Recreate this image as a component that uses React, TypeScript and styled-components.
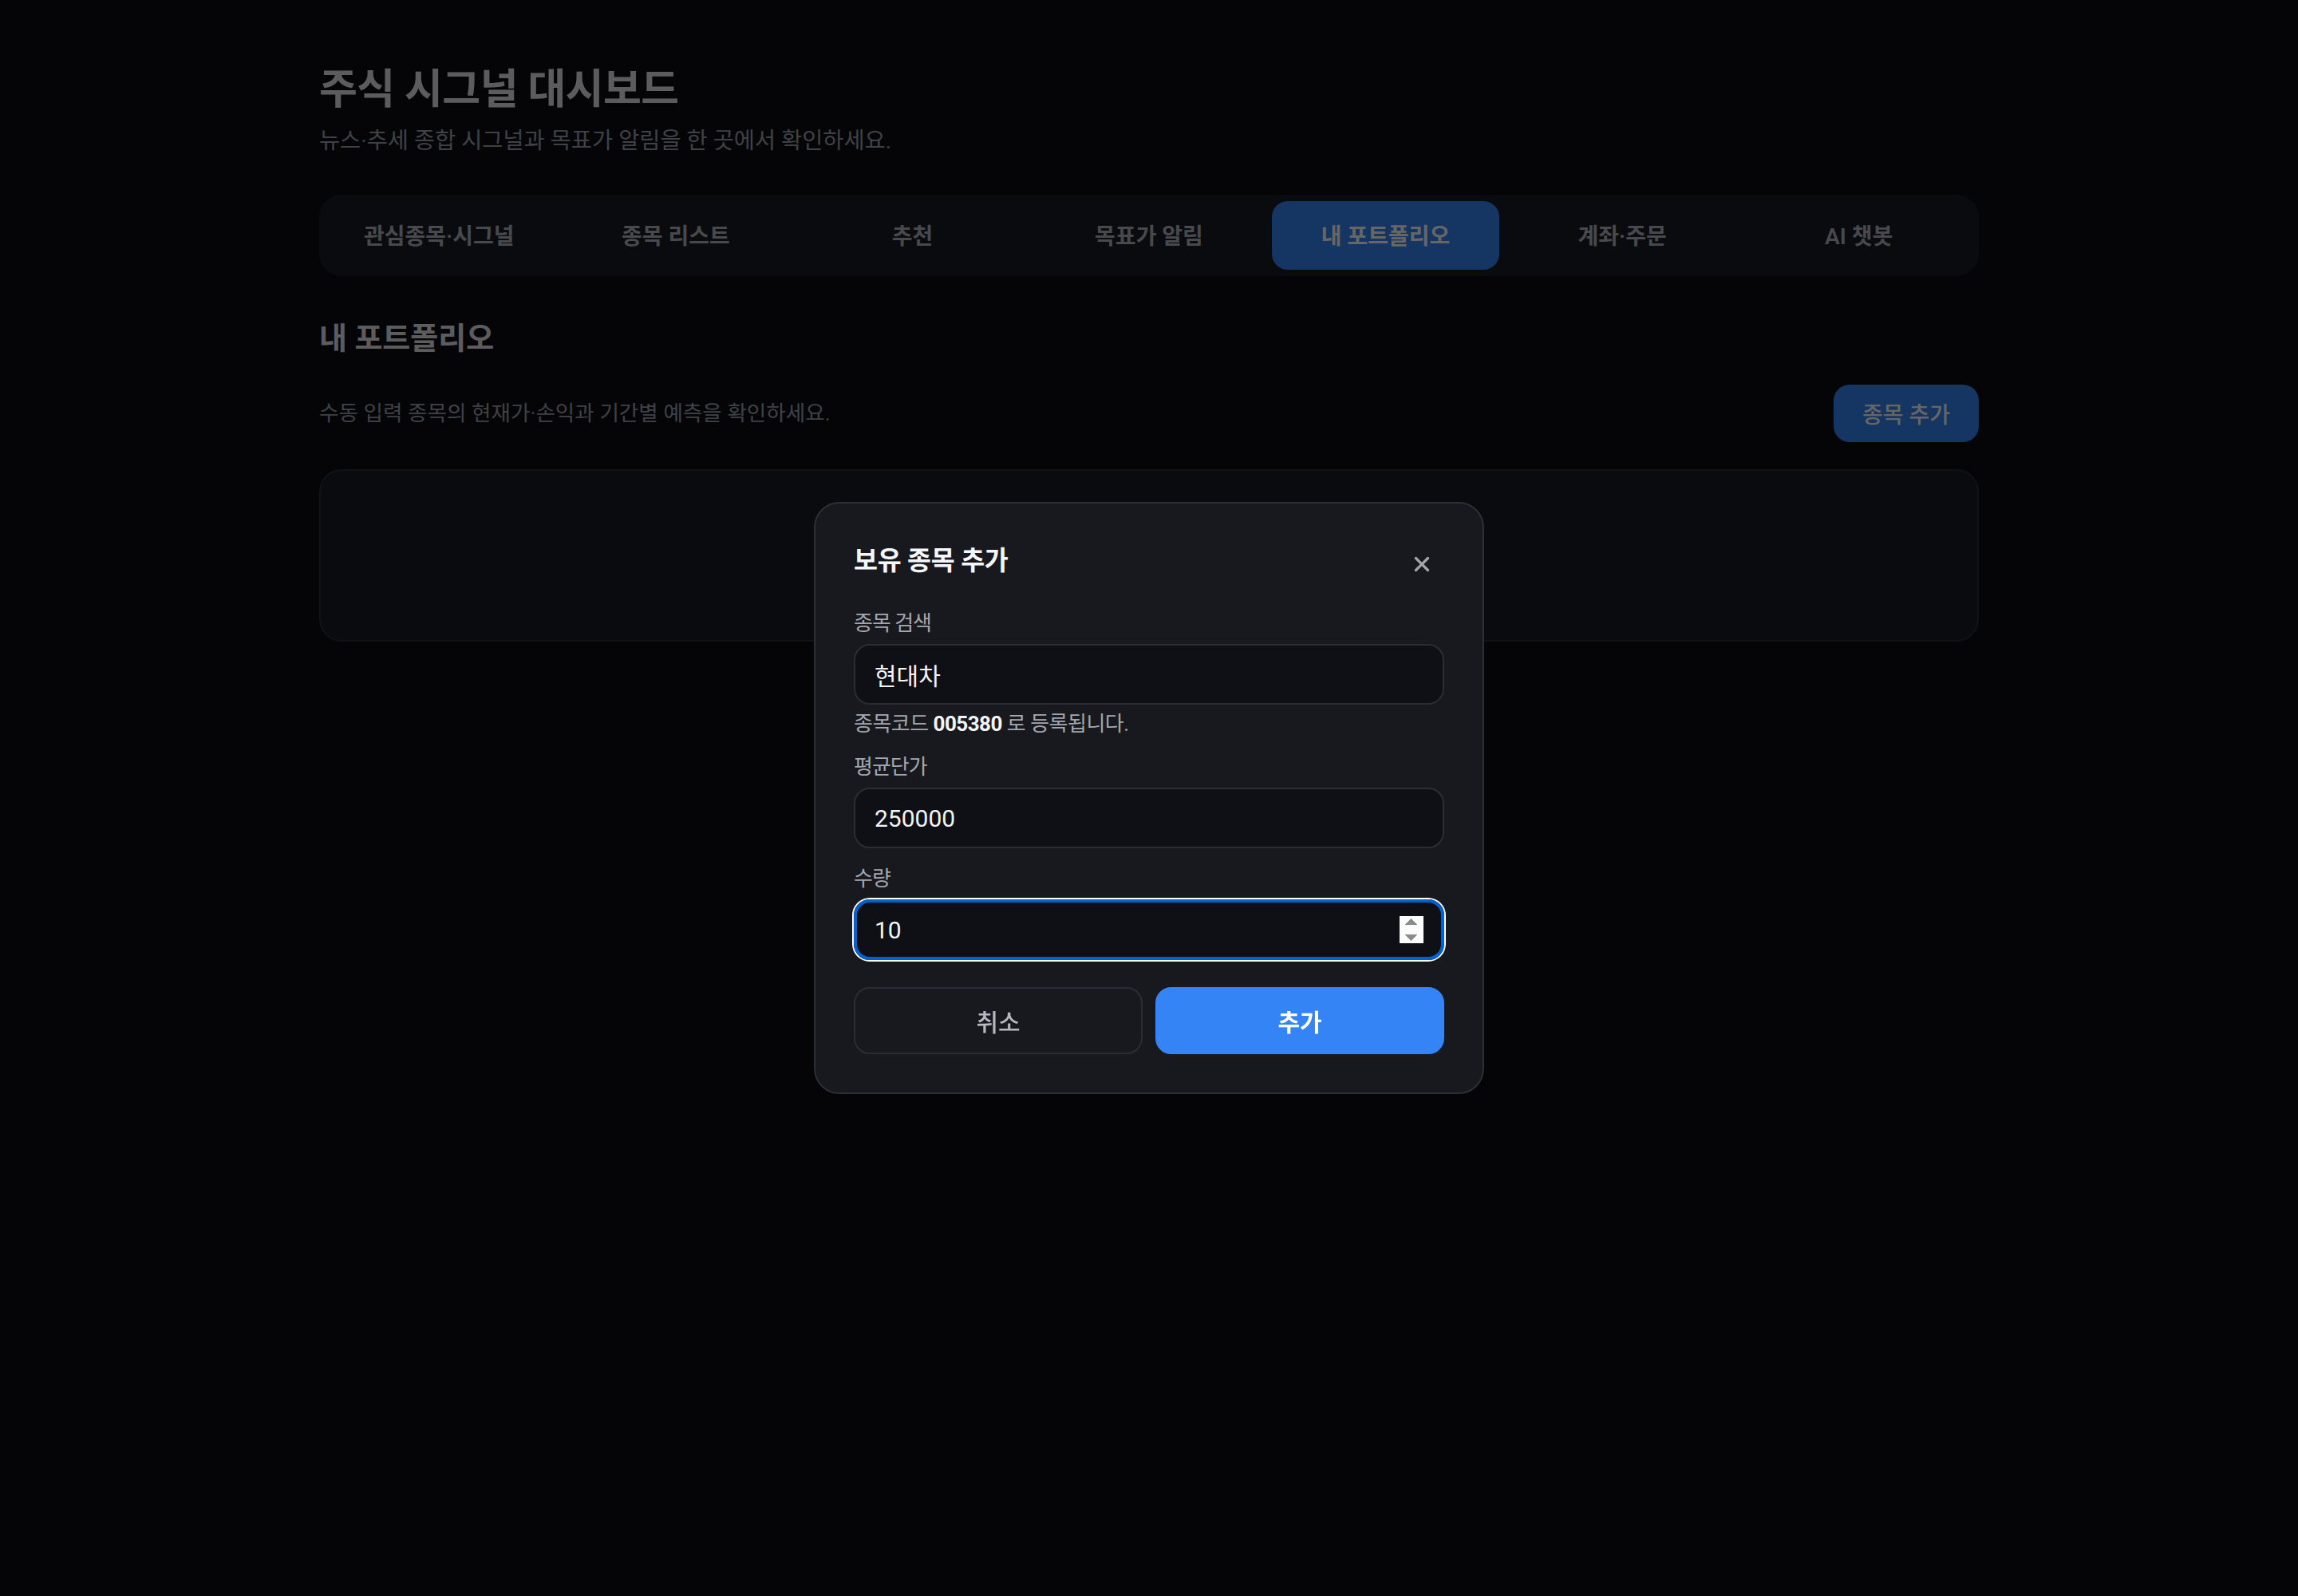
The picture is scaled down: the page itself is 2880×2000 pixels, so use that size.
import styled, { createGlobalStyle } from 'styled-components';
import { X } from 'lucide-react';

const GlobalStyle = createGlobalStyle`
  * {
    box-sizing: border-box;
  }

  html,
  body {
    margin: 0;
    padding: 0;
    background: #0d0e12;
  }

  body {
    font-family: Roboto, "Noto Sans CJK KR", sans-serif;
    color: #e5e7eb;
  }
`;

const TABS = ['관심종목·시그널', '종목 리스트', '추천', '목표가 알림', '내 포트폴리오', '계좌·주문', 'AI 챗봇'];

const App = () => {
  return (
    <>
      <GlobalStyle />
      <Screen>
        <Page>
          <Title>주식 시그널 대시보드</Title>
          <Subtitle>뉴스·추세 종합 시그널과 목표가 알림을 한 곳에서 확인하세요.</Subtitle>

          <TabBar>
            {TABS.map((tab) => (
              <Tab key={tab} $active={tab === '내 포트폴리오'}>
                {tab}
              </Tab>
            ))}
          </TabBar>

          <SectionTitle>내 포트폴리오</SectionTitle>
          <SectionRow>
            <Description>수동 입력 종목의 현재가·손익과 기간별 예측을 확인하세요.</Description>
            <AddButton>종목 추가</AddButton>
          </SectionRow>
          <HoldingsCard />
        </Page>

        <Overlay>
          <Modal>
            <ModalHeader>
              <ModalTitle>보유 종목 추가</ModalTitle>
              <CloseButton aria-label="닫기">
                <X size={15} strokeWidth={2.6} />
              </CloseButton>
            </ModalHeader>

            <Form>
              <Field>
                <Label>종목 검색</Label>
                <Input type="text" defaultValue="현대차" />
                <Helper>
                  종목코드 <strong>005380</strong> 로 등록됩니다.
                </Helper>
              </Field>

              <Field>
                <Label>평균단가</Label>
                <Input type="number" defaultValue={250000} />
              </Field>

              <Field>
                <Label>수량</Label>
                <Input type="number" defaultValue={10} autoFocus />
              </Field>

              <ButtonRow>
                <ModalButton type="button">취소</ModalButton>
                <ModalButton type="button" $primary>
                  추가
                </ModalButton>
              </ButtonRow>
            </Form>
          </Modal>
        </Overlay>
      </Screen>
    </>
  );
};

export default App;

const Screen = styled.div`
  zoom: 2;
  min-height: 1000px;
`;

const Page = styled.div`
  max-width: 1040px;
  margin: 0 auto;
  padding-top: 41px;
`;

const Title = styled.h1`
  margin: 0;
  font-size: 26px;
  font-weight: 700;
  line-height: 1.2;
  letter-spacing: -0.01em;
  color: #e5e7eb;
`;

const Subtitle = styled.p`
  margin: 6px 0 0;
  font-size: 14.2px;
  line-height: 21px;
  color: #9ca3af;
`;

const TabBar = styled.nav`
  display: grid;
  grid-template-columns: repeat(7, 1fr);
  gap: 6px;
  margin-top: 23px;
  padding: 4px;
  border-radius: 14px;
  background: #1b1d24;
`;

const Tab = styled.button<{ $active?: boolean }>`
  height: 43px;
  padding-bottom: 2px;
  border: 0;
  border-radius: 10px;
  background: ${({ $active }) => ($active ? '#3584f5' : 'transparent')};
  color: ${({ $active }) => ($active ? '#ffffff' : '#b2b6bf')};
  font-family: inherit;
  font-size: 14px;
  font-weight: 600;
  cursor: pointer;
`;

const SectionTitle = styled.h2`
  margin: 26px 0 0;
  font-size: 19px;
  font-weight: 700;
  line-height: 26px;
  color: #e5e7eb;
`;

const SectionRow = styled.div`
  display: flex;
  align-items: center;
  justify-content: space-between;
  margin-top: 16px;
`;

const Description = styled.p`
  margin: 0;
  font-size: 13.3px;
  line-height: 20px;
  color: #9ca3af;
`;

const AddButton = styled.button`
  height: 36px;
  padding: 0 18px;
  border: 0;
  border-radius: 10px;
  background: #3584f5;
  color: #ffffff;
  font-family: inherit;
  font-size: 14px;
  font-weight: 500;
  cursor: pointer;
`;

const HoldingsCard = styled.section`
  height: 108px;
  margin-top: 17px;
  border: 1px solid #2a2d35;
  border-radius: 14px;
  background: #1b1d24;
`;

const Overlay = styled.div`
  position: fixed;
  inset: 0;
  display: flex;
  align-items: center;
  justify-content: center;
  background: rgba(0, 0, 0, 0.6);
`;

const Modal = styled.div`
  width: 420px;
  padding: 24px;
  border: 1px solid #2c2f37;
  border-radius: 16px;
  background: #18191e;
`;

const ModalHeader = styled.div`
  display: flex;
  align-items: flex-start;
  justify-content: space-between;
  height: 28px;
  margin-bottom: 14px;
`;

const ModalTitle = styled.h3`
  margin: 0;
  font-size: 16.3px;
  font-weight: 700;
  line-height: 24px;
  letter-spacing: -0.01em;
  color: #f5f6f8;
`;

const CloseButton = styled.button`
  display: flex;
  align-items: center;
  justify-content: center;
  width: 28px;
  height: 28px;
  padding: 0;
  border: 0;
  background: transparent;
  color: #a1a5ad;
  cursor: pointer;
`;

const Form = styled.div`
  display: flex;
  flex-direction: column;
  gap: 10px;
`;

const Field = styled.div`
  display: flex;
  flex-direction: column;
`;

const Label = styled.label`
  margin-bottom: 4px;
  font-size: 13px;
  line-height: 18px;
  letter-spacing: -0.04em;
  color: #a3a7af;
`;

const Input = styled.input`
  height: 38px;
  padding: 0 12px;
  border: 1px solid #2a2d35;
  border-radius: 10px;
  background: #0f1015;
  color: #f3f4f6;
  font-family: inherit;
  font-size: 15px;

  &:focus {
    outline: 2px solid #0062d1;
    outline-offset: -2px;
    box-shadow: 0 0 0 1px #ffffff;
  }
`;

const Helper = styled.div`
  margin-top: 4px;
  font-size: 13px;
  line-height: 16px;
  letter-spacing: -0.02em;
  color: #a3a7af;

  strong {
    font-weight: 700;
    color: #f3f4f6;
  }
`;

const ButtonRow = styled.div`
  display: grid;
  grid-template-columns: 1fr 1fr;
  gap: 8px;
  margin-top: 7px;
`;

const ModalButton = styled.button<{ $primary?: boolean }>`
  height: 42px;
  border: 1px solid ${({ $primary }) => ($primary ? '#3584f5' : '#2a2d35')};
  border-radius: 10px;
  background: ${({ $primary }) => ($primary ? '#3584f5' : 'transparent')};
  color: ${({ $primary }) => ($primary ? '#ffffff' : '#b4b8bf')};
  font-family: inherit;
  font-size: 15px;
  font-weight: ${({ $primary }) => ($primary ? 600 : 500)};
  cursor: pointer;
`;
